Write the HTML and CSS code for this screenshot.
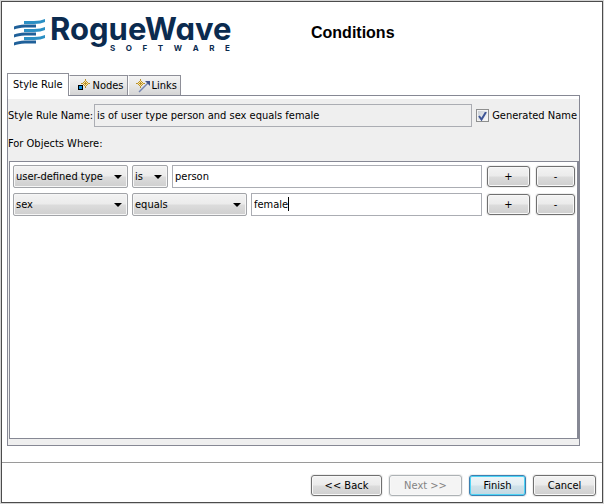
FILE: index.html
```html
<!DOCTYPE html>
<html lang="en">
<head>
<meta charset="utf-8">
<title>Conditions</title>
<link rel="stylesheet" href="styles.css">
</head>
<body>
<div class="window">
  <header class="header">
    <div class="logo">
      <svg class="waves" width="33" height="28" viewBox="0 0 33 28" aria-hidden="true">
        <g fill="#2a8fc4">
          <path d="M10 2H20C25 2 28 1 31 0V3C28 4 25 5 20 5H10Z"/>
          <path d="M10 10H20C25 10 28 9 31 8V11C28 12 25 13 20 13H10Z"/>
          <path d="M10 18H20C25 18 28 17 31 16V19C28 20 25 21 20 21H10Z"/>
        </g>
        <g fill="#1f6099">
          <path d="M22 5.500H11C6 5.500 3 6.500 0 7.500V10.500C3 9.500 6 8.500 11 8.500H22Z"/>
          <path d="M22 13.500H11C6 13.500 3 14.500 0 15.500V18.500C3 17.500 6 16.500 11 16.500H22Z"/>
          <path d="M22 21.500H11C6 21.500 3 22.500 0 23.500V26.500C3 25.500 6 24.500 11 24.500H22Z"/>
        </g>
      </svg>
      <div class="wordmark">
        <span class="brand">RogueWave</span>
        <span class="sub"><span>S</span><span>O</span><span>F</span><span>T</span><span>W</span><span>A</span><span>R</span><span>E</span></span>
      </div>
    </div>
    <h1>Conditions</h1>
  </header>

  <main class="main">
    <div class="tabs" role="tablist">
      <button class="tab active" role="tab" aria-selected="true">Style Rule</button>
      <button class="tab" role="tab" aria-selected="false">
        <svg width="14" height="14" viewBox="0 0 14 14" aria-hidden="true">
          <path d="M8.500 0V9M4 4.500H13" stroke="#b8902c"/>
          <path d="M8.500 1.500L11.500 4.500L8.500 7.500L5.500 4.500Z" fill="#ffe9a0" stroke="#b8902c"/>
          <path d="M8.500 3V6M7 4.500H10" stroke="#b8902c"/>
          <rect x="1.500" y="6.500" width="4" height="4" fill="#0a8fe0" stroke="#000"/>
        </svg>
        Nodes
      </button>
      <button class="tab" role="tab" aria-selected="false">
        <svg width="14" height="14" viewBox="0 0 14 14" aria-hidden="true">
          <path d="M4.500 0V9M0 4.500H9" stroke="#b8902c"/>
          <path d="M4.500 1.500L7.500 4.500L4.500 7.500L1.500 4.500Z" fill="#ffe9a0" stroke="#b8902c"/>
          <path d="M4.500 3V6M3 4.500H6" stroke="#b8902c"/>
          <path d="M3 13L12 4" stroke="#7484b0" stroke-width="1.500"/>
          <path d="M9 2H14V7Z" fill="#43548c"/>
        </svg>
        Links
      </button>
    </div>

    <section class="panel">
      <div class="body">
        <div class="name-row">
          <label for="rule">Style Rule Name:</label>
          <input class="field readonly" id="rule" type="text" readonly value="is of user type person and sex equals female">
          <label class="check"><input type="checkbox" checked><svg class="tick" width="9" height="9" viewBox="0 0 9 9" aria-hidden="true"><path d="M1 4L3.500 7.500L8 0" fill="none" stroke="#3e5596" stroke-width="2"/></svg>Generated Name</label>
        </div>
        <h2>For Objects Where:</h2>
        <div class="rules">
          <div class="rule">
            <span class="combo wide"><select aria-label="Property"><option>user-defined type</option></select></span>
            <span class="combo small"><select aria-label="Operator"><option>is</option></select></span>
            <input class="field" type="text" aria-label="Value" value="person">
            <span class="actions"><button class="btn add">+</button><button class="btn remove">-</button></span>
          </div>
          <div class="rule">
            <span class="combo wide"><select aria-label="Property"><option>sex</option></select></span>
            <span class="combo wide"><select aria-label="Operator"><option>equals</option></select></span>
            <span class="editing"><input class="field" type="text" aria-label="Value" value="female"><i class="caret"></i></span>
            <span class="actions"><button class="btn add">+</button><button class="btn remove">-</button></span>
          </div>
        </div>
      </div>
    </section>
  </main>

  <footer class="footer">
    <button class="btn back">&lt;&lt; Back</button>
    <button class="btn next" disabled>Next &gt;&gt;</button>
    <button class="btn finish">Finish</button>
    <button class="btn cancel">Cancel</button>
  </footer>
</div>
</body>
</html>
```
FILE: styles.css
```css
* { box-sizing: border-box; }

body {
  margin: 0;
  padding: 1px;
  min-height: 100vh;
  display: flex;
  background: #d4d4d4;
  color: #000;
  font: 11px/16px "DejaVu Sans Condensed", sans-serif;
}

button, input, select { font: inherit; color: inherit; }
h1, h2 { margin: 0; }

.window {
  flex: 1;
  min-width: 0;
  display: flex;
  flex-direction: column;
  border: 1px solid #4c4c4c;
  background: #fff;
}

.header {
  display: flex;
  align-items: flex-start;
  padding: 16px 12px 0;
  height: 71px;
}

.logo { display: flex; gap: 3px; width: 297px; }
.waves { margin-top: 1px; }

.wordmark {
  display: flex;
  flex-direction: column;
  gap: 4px;
  width: 180px;
  color: #0b2b4f;
  font-family: Inter, sans-serif;
  font-weight: 700;
}

.brand {
  font-size: 31px;
  line-height: 22px;
  font-feature-settings: "cv11";
}

.sub {
  display: flex;
  justify-content: space-between;
  padding-left: 60px;
  font-size: 8px;
  line-height: 8px;
}

h1 { font: bold 16px/30px "Liberation Sans", sans-serif; }

.main {
  flex: 1;
  display: flex;
  flex-direction: column;
  padding: 0 22px 16px 5px;
}

.tabs { display: flex; align-items: flex-end; }

.tab {
  position: relative;
  display: flex;
  align-items: center;
  gap: 2px;
  height: 20px;
  padding: 0 3px 0 7px;
  border: 1px solid #8e8f98;
  border-bottom: 0;
  border-left-color: #fff;
  background: linear-gradient(#f4f4f4, #e8e8e8 45%, #d4d4d4);
  white-space: nowrap;
}

.tab.active {
  height: 23px;
  margin-bottom: -1px;
  padding: 0 5px;
  border-color: #8e8f98;
  background: #fff;
  z-index: 1;
}

.panel {
  flex: 1;
  display: flex;
  border: 1px solid #868894;
  padding-top: 3px;
  background: #fff;
}

.body {
  flex: 1;
  min-width: 0;
  display: flex;
  flex-direction: column;
  padding: 5px 0 6px;
  background: #efefef;
}

.name-row { display: flex; align-items: center; margin-right: 2px; }
.name-row label { white-space: nowrap; }
.name-row > label:first-child { width: 86px; }

.field {
  flex: 1;
  width: 100%;
  min-width: 0;
  height: 23px;
  padding: 0 2px 1px;
  border: 1px solid #abadb3;
  border-radius: 0;
  background: #fff;
  outline: 0;
}

.field.readonly { background: #efefef; }

.check {
  position: relative;
  display: flex;
  align-items: center;
  gap: 3px;
  margin-left: 4px;
}

.check input {
  appearance: none;
  width: 13px;
  height: 13px;
  margin: 0;
  border: 1px solid #8e8f8f;
  background: linear-gradient(135deg, #c4cad2, #fff);
  box-shadow: inset 0 0 0 1px #f4f4f4;
}

.tick { position: absolute; left: 2px; top: 4px; }

h2 { margin: 9px 0; font-size: 11px; font-weight: 400; line-height: 16px; }

.rules {
  flex: 1;
  display: flex;
  flex-direction: column;
  gap: 5px;
  margin-left: 1px;
  padding: 3px 2px 3px 3px;
  border: 1px solid #868894;
  border-right-width: 2px;
  background: #fff;
}

.rule { display: flex; align-items: center; gap: 4px; }

.combo {
  position: relative;
  border: 1px solid #a2a4a8;
  border-radius: 2px;
  background: linear-gradient(#f3f3f3, #ebebeb 48%, #dcdcdc 52%, #cfcfcf);
  box-shadow: inset 0 0 0 1px #f6f6f6;
}

.combo select {
  display: block;
  appearance: none;
  width: 100%;
  height: 21px;
  padding: 0 16px 0 2px;
  border: 0;
  background: none;
}

.combo::after {
  content: "";
  position: absolute;
  right: 5px;
  top: 9px;
  border: 4px solid transparent;
  border-top-color: #000;
  border-bottom: 0;
  pointer-events: none;
}

.wide { width: 115px; }
.small { width: 36px; }

.editing { position: relative; display: flex; flex: 1; }
.caret { position: absolute; left: 37px; top: 4px; width: 1px; height: 14px; background: #000; }

.actions { display: flex; gap: 6px; margin-left: 1px; }

.btn {
  height: 21px;
  padding: 0;
  border: 1px solid #707070;
  border-radius: 3px;
  background: linear-gradient(#f3f3f3, #ebebeb 48%, #dcdcdc 52%, #cfcfcf);
  box-shadow: inset 0 0 0 1px #f8f8f8, 0 0 0 1px #efefef;
}

.add { width: 43px; }
.remove { width: 39px; }

.footer {
  display: flex;
  justify-content: flex-end;
  gap: 7px;
  padding: 12px 6px 6px;
  border-top: 1px solid #9a9a9a;
}

.back { width: 71px; }
.next { width: 73px; }
.finish { width: 57px; }
.cancel { width: 63px; }

.btn:disabled { border-color: #adb2b5; background: #f4f4f4; color: #838383; }

.finish {
  border-color: #3c7fb1;
  background: linear-gradient(#eef5f8, #e2eef3 48%, #cfe2ea 52%, #c2d8e2);
  box-shadow: inset 0 0 0 1px #4fd4f5, 0 0 0 1px #efefef;
}
```
